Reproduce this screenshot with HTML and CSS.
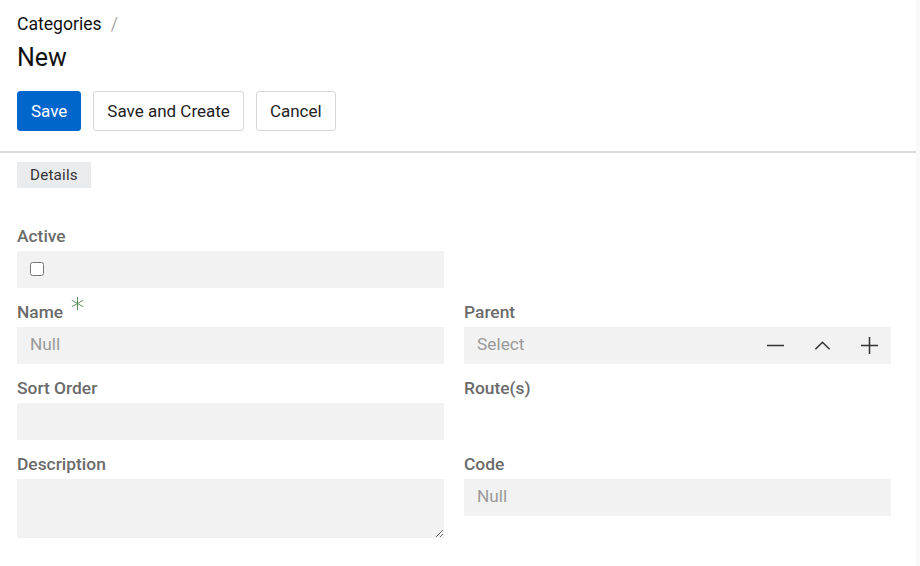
FILE: index.html
```html
<!DOCTYPE html>
<html>
<head>
<meta charset="utf-8" />
<title>Categories - New</title>
<meta name="viewport" content="width=device-width, initial-scale=1">
<link rel="stylesheet" href="styles.css">
</head>

<body>
<div class="page">
  <div class="header">
    <div class="breadcrumb"><a href="#" class="crumb">Categories</a><span class="sep">/</span></div>
    <h1 class="title">New</h1>
    <div class="actions">
      <button type="button" class="btn btn-primary">Save</button>
      <button type="button" class="btn">Save and Create</button>
      <button type="button" class="btn">Cancel</button>
    </div>
  </div>

  <div class="tabs">
    <span class="tab">Details</span>
  </div>

  <form class="form">
    <div class="field">
      <label class="label">Active</label>
      <div class="box box-check"><input type="checkbox" class="checkbox"></div>
    </div>
    <div class="field"></div>

    <div class="field">
      <label class="label">Name<svg class="required" viewBox="0 0 14 14"><path d="M7 0v14M0.9 3.5l12.2 7M0.9 10.5l12.2-7" /></svg></label>
      <input type="text" class="box textbox" placeholder="Null">
    </div>
    <div class="field">
      <label class="label">Parent</label>
      <div class="box select">
        <span class="placeholder">Select</span>
        <span class="select-icons">
          <svg class="icon" viewBox="0 0 18 18"><path d="M0 9h18" /></svg>
          <svg class="icon" viewBox="0 0 18 18"><path d="M1.5 13l7.5-7.5 7.5 7.5" /></svg>
          <svg class="icon" viewBox="0 0 18 18"><path d="M0 9h18M9 0v18" /></svg>
        </span>
      </div>
    </div>

    <div class="field">
      <label class="label">Sort Order</label>
      <input type="text" class="box textbox">
    </div>
    <div class="field">
      <label class="label">Route(s)</label>
    </div>

    <div class="field">
      <label class="label">Description</label>
      <textarea class="box textarea"></textarea>
    </div>
    <div class="field">
      <label class="label">Code</label>
      <input type="text" class="box textbox" placeholder="Null">
    </div>
  </form>
</div>
</body>
</html>
```

FILE: styles.css
```css
body {
  margin: 0;
  background: #f9f9f9;
  font-family: Roboto, 'Helvetica Neue', sans-serif;
  color: #111;
}

.page {
  width: 916px;
  min-height: 100vh;
  background: #fff;
}

.header {
  padding: 12px 17px 20px;
  border-bottom: 2px solid #dcdcdc;
}

.breadcrumb {
  font-size: 17.6px;
  line-height: 24px;
}

.crumb {
  color: #111;
  text-decoration: none;
}

.sep {
  color: #aaa;
  margin-left: 9px;
}

.title {
  margin: 6px 0 0;
  font-size: 25px;
  font-weight: 400;
  line-height: 32px;
}

.actions {
  display: flex;
  gap: 12px;
  margin-top: 17px;
}

.btn {
  height: 40px;
  padding: 0 13px;
  background: #fff;
  border: 1px solid #d6d6d6;
  border-radius: 3px;
  font-family: inherit;
  font-size: 17px;
  color: #222;
  cursor: pointer;
}

.btn-primary {
  background-color: #0066cc;
  border-color: #0066cc;
  color: #fff;
}

.tabs {
  padding: 9px 17px 0;
}

.tab {
  display: inline-block;
  height: 26px;
  line-height: 26px;
  padding: 0 13px;
  background: #e9ebec;
  font-size: 15.2px;
  color: #333;
  letter-spacing: 0.2px;
}

.form {
  display: grid;
  grid-template-columns: 427px 427px;
  column-gap: 20px;
  row-gap: 14px;
  padding: 38px 17px 0;
}

.field {
  display: flex;
  flex-direction: column;
}

.label {
  position: relative;
  font-size: 17.4px;
  font-weight: 500;
  line-height: 20px;
  margin-bottom: 5px;
  color: #6b6b6b;
}

.required {
  position: absolute;
  top: -5px;
  margin-left: 8px;
  width: 13px;
  height: 13px;
  fill: none;
  stroke: #4f8a52;
  stroke-width: 1;
}

.box {
  box-sizing: border-box;
  height: 37px;
  background: #f2f2f2;
  border: none;
  border-radius: 0;
}

.box-check {
  display: flex;
  align-items: center;
  padding: 0 0 2px 13px;
}

.checkbox {
  margin: 0;
  width: 14px;
  height: 14px;
}

.textbox {
  padding: 0 13px 3px;
  font-family: inherit;
  font-size: 17.3px;
  color: #222;
  outline: none;
}

.textbox::placeholder {
  color: #9a9a9a;
}

.textarea {
  height: 59px;
  resize: vertical;
  font-family: inherit;
  font-size: 16px;
  padding: 8px 13px;
  outline: none;
}

.select {
  display: flex;
  align-items: center;
  justify-content: space-between;
  padding: 0 13px;
}

.placeholder {
  font-size: 17.3px;
  color: #9a9a9a;
  padding-bottom: 4px;
}

.select-icons {
  display: flex;
  gap: 30px;
}

.icon {
  width: 17px;
  height: 17px;
  fill: none;
  stroke: #333;
  stroke-width: 1.6;
}
```
